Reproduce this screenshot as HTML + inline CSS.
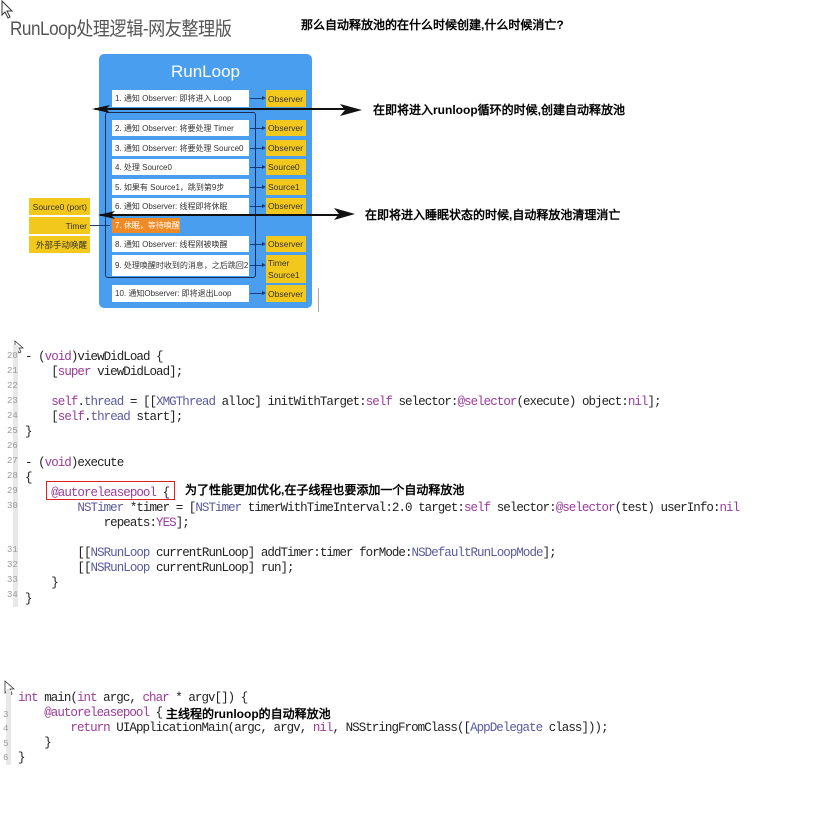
<!DOCTYPE html>
<html><head><meta charset="utf-8"><style>
*{margin:0;padding:0;box-sizing:border-box}
body{width:820px;height:837px;background:#fff;position:relative;overflow:hidden;font-family:"Liberation Sans","Noto Sans CJK SC",sans-serif}
.a{position:absolute;white-space:nowrap}
.blue{position:absolute;left:99px;top:54px;width:213px;height:254px;background:#4a9ef0;border-radius:5px}
.w{position:absolute;left:112px;width:137px;background:#fff;font-size:8px;color:#333;padding-left:3px;display:flex;align-items:center}
.y{position:absolute;left:266px;width:40px;background:#f3c81c;font-size:8.5px;color:#333;padding-left:2px;display:flex;align-items:center}
.ly{position:absolute;left:29px;width:61px;height:17px;background:#f3c81c;font-size:8.5px;color:#333;display:flex;align-items:center;justify-content:flex-end;padding-right:3px}
.sa{position:absolute;left:250px;width:14px;height:1px;background:#1a3a7a}
.sa:after{content:"";position:absolute;right:-2px;top:-2px;border-left:4px solid #1a3a7a;border-top:2.5px solid transparent;border-bottom:2.5px solid transparent}
.cn{font-weight:bold;font-size:12px;color:#000;font-family:"Liberation Sans","WenQuanYi Zen Hei",sans-serif}
.c{position:absolute;white-space:pre;font-family:"Liberation Mono","DejaVu Sans Mono",monospace;font-size:12.5px;letter-spacing:-0.95px;color:#222;line-height:15px}
.k{color:#9b3a9b}.t{color:#5a5aa0}.n{position:absolute;font-family:"Liberation Mono",monospace;font-size:9px;color:#999;left:7px}
.gut{position:absolute;left:13px;width:5px;background:#e8e8e8}
</style></head><body>
<svg class="a" style="left:0;top:0" width="16" height="20"><path d="M2 1 L2 15 L5 12 L8 18 L10 17 L7 11 L12 11 Z" fill="#fff" stroke="#333" stroke-width="1"/></svg>
<div class="a" style="left:10px;top:14px;font-size:19px;color:#555;transform:scaleX(0.9);transform-origin:0 0;letter-spacing:-0.5px">RunLoop处理逻辑-网友整理版</div>
<div class="a cn" style="left:301px;top:16px">那么自动释放池的在什么时候创建,什么时候消亡?</div>

<div class="blue"></div>
<div class="a" style="left:99px;top:62px;width:213px;text-align:center;color:#fff;font-size:17px">RunLoop</div>
<div class="a" style="left:105px;top:112px;width:151px;height:166px;border:1.5px solid #1a2c55;border-radius:3px"></div>
<div class="w" style="top:90px;height:17px">1. 通知 Observer: 即将进入 Loop</div>
<div class="w" style="top:120px;height:16px">2. 通知 Observer: 将要处理 Timer</div>
<div class="w" style="top:140px;height:16px">3. 通知 Observer: 将要处理 Source0</div>
<div class="w" style="top:159px;height:16px">4. 处理 Source0</div>
<div class="w" style="top:179px;height:16px">5. 如果有 Source1，跳到第9步</div>
<div class="w" style="top:198px;height:16px">6. 通知 Observer: 线程即将休眠</div>
<div class="w" style="top:218px;height:15px;width:68px;background:#f08a24;color:#fff">7. 休眠，等待唤醒</div>
<div class="w" style="top:236px;height:16px">8. 通知 Observer: 线程刚被唤醒</div>
<div class="w" style="top:255px;height:21px">9. 处理唤醒时收到的消息，之后跳回2</div>
<div class="w" style="top:285px;height:17px">10. 通知Observer: 即将退出Loop</div>
<div class="y" style="top:90px;height:17px">Observer</div>
<div class="y" style="top:120px;height:16px">Observer</div>
<div class="y" style="top:140px;height:16px">Observer</div>
<div class="y" style="top:159px;height:16px">Source0</div>
<div class="y" style="top:179px;height:16px">Source1</div>
<div class="y" style="top:198px;height:16px">Observer</div>
<div class="y" style="top:236px;height:16px">Observer</div>
<div class="y" style="top:255px;height:28px;line-height:12px;display:block;padding-top:2px">Timer<br>Source1</div>
<div class="y" style="top:285px;height:17px">Observer</div>
<div class="sa" style="top:98px"></div><div class="sa" style="top:128px"></div><div class="sa" style="top:148px"></div><div class="sa" style="top:167px"></div><div class="sa" style="top:187px"></div><div class="sa" style="top:206px"></div><div class="sa" style="top:244px"></div><div class="sa" style="top:265px"></div><div class="sa" style="top:293px"></div>
<div class="ly" style="top:198px">Source0 (port)</div>
<div class="ly" style="top:217px">Timer</div>
<div class="ly" style="top:236px">外部手动唤醒</div>
<div class="a" style="left:90px;top:225px;width:20px;height:1px;background:#1a3a7a"></div>
<div class="a" style="left:318px;top:288px;width:1px;height:24px;background:#aaa"></div>

<svg class="a" style="left:0;top:0" width="820" height="240">
<line x1="95" y1="109" x2="350" y2="109" stroke="#111" stroke-width="2"/>
<path d="M92 109 L110 105 L106 109 L110 113Z" fill="#111"/>
<path d="M362 110 L340 104 L345 110 L340 116Z" fill="#111"/>
<line x1="100" y1="215" x2="345" y2="215" stroke="#111" stroke-width="2"/>
<path d="M98 215 L115 211 L111 215 L115 219Z" fill="#111"/>
<path d="M355 214 L334 208 L339 214 L334 220Z" fill="#111"/>
</svg>
<div class="a cn" style="left:373px;top:101px">在即将进入runloop循环的时候,创建自动释放池</div>
<div class="a cn" style="left:365px;top:206px">在即将进入睡眠状态的时候,自动释放池清理消亡</div>

<svg class="a" style="left:14px;top:340px" width="14" height="14"><path d="M1 1 L1 11 L3 9 L5 13 L7 12 L5 8 L9 8Z" fill="#fff" stroke="#333" stroke-width=".8"/></svg>
<div class="gut" style="top:345px;height:262px"></div>
<div class="n" style="top:351px">20</div><div class="n" style="top:366px">21</div><div class="n" style="top:381px">22</div><div class="n" style="top:396px">23</div><div class="n" style="top:411px">24</div><div class="n" style="top:426px">25</div><div class="n" style="top:441px">26</div><div class="n" style="top:456px">27</div><div class="n" style="top:471px">28</div><div class="n" style="top:486px">29</div><div class="n" style="top:501px">30</div><div class="n" style="top:545px">31</div><div class="n" style="top:560px">32</div><div class="n" style="top:575px">33</div><div class="n" style="top:590px">34</div>
<div class="c" style="left:25px;top:350px;line-height:15.1px">- (<span class="k">void</span>)viewDidLoad {
    [<span class="k">super</span> viewDidLoad];

    <span class="k">self</span>.<span class="t">thread</span> = [[<span class="t">XMGThread</span> alloc] initWithTarget:<span class="k">self</span> selector:<span class="k">@selector</span>(execute) object:<span class="k">nil</span>];
    [<span class="k">self</span>.<span class="t">thread</span> start];
}

- (<span class="k">void</span>)execute
{
    <span class="k">@autoreleasepool</span> {
        <span class="t">NSTimer</span> *timer = [<span class="t">NSTimer</span> timerWithTimeInterval:2.0 target:<span class="k">self</span> selector:<span class="k">@selector</span>(test) userInfo:<span class="k">nil</span>
            repeats:<span class="k">YES</span>];

        [[<span class="t">NSRunLoop</span> currentRunLoop] addTimer:timer forMode:<span class="t">NSDefaultRunLoopMode</span>];
        [[<span class="t">NSRunLoop</span> currentRunLoop] run];
    }
}</div>
<div class="a" style="left:46px;top:481px;width:129px;height:19px;border:1.5px solid #e02020"></div>
<div class="a cn" style="left:185px;top:481px">为了性能更加优化,在子线程也要添加一个自动释放池</div>

<svg class="a" style="left:4px;top:680px" width="14" height="18"><path d="M1 1 L1 13 L4 10 L6 15 L8 14 L6 9 L10 9Z" fill="#fff" stroke="#333" stroke-width=".8"/></svg>
<div class="gut" style="top:690px;height:75px;left:6px"></div>
<div class="n" style="top:710px;left:3px">3</div><div class="n" style="top:724px;left:3px">4</div><div class="n" style="top:739px;left:3px">5</div><div class="n" style="top:753px;left:3px">6</div>
<div class="c" style="left:18px;top:691px;line-height:15px"><span class="k">int</span> main(<span class="k">int</span> argc, <span class="k">char</span> * argv[]) {
    <span class="k">@autoreleasepool</span> {
        <span class="k">return</span> UIApplicationMain(argc, argv, <span class="k">nil</span>, NSStringFromClass([<span class="t">AppDelegate</span> class]));
    }
}</div>
<div class="a cn" style="left:166px;top:705px;background:#fff">主线程的runloop的自动释放池</div>
</body></html>
